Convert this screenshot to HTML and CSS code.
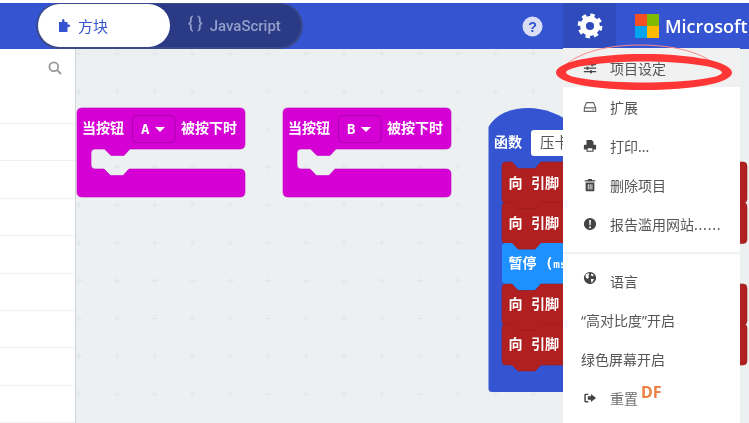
FILE: index.html
```html
<!DOCTYPE html>
<html lang="zh">
<head>
<meta charset="utf-8">
<title>方块编辑器</title>
<link rel="stylesheet" href="styles.css">
</head>
<body>
<div class="app">
  <header class="topbar">
    <div class="toggle">
      <div class="tab tab-on">
        <svg class="puzzle" viewBox="0 0 11 13"><path d="M0 3h3.2C2.6 1 3.4 0 4.3 0s1.700 1 1.100 3H8.500v2.600c1.600-.5 2.500.2 2.500 1.200s-.9 1.700-2.500 1.200V13H0z"/></svg>
        <span>方块</span>
      </div>
      <div class="tab tab-off"><span class="braces">{ }</span><span>JavaScript</span></div>
    </div>
    <svg class="help" viewBox="0 0 22 22"><circle cx="11" cy="11" r="10.500"/><text x="11" y="16.500" text-anchor="middle">?</text></svg>
    <div class="gear-cell">
      <svg class="gear" viewBox="0 0 26 26"><circle class="gear-teeth" cx="13" cy="13" r="10.600"/><circle class="gear-ring" cx="13" cy="13" r="7"/></svg>
    </div>
    <div class="brand">
      <div class="logo"><i class="sq-r"></i><i class="sq-g"></i><i class="sq-b"></i><i class="sq-y"></i></div>
      <span>Microsoft</span>
    </div>
  </header>
  <main class="workspace">
    <aside class="sidebar">
      <div class="search-row">
        <svg class="search" viewBox="0 0 14 14"><circle cx="5.800" cy="5.800" r="4.400"/><path d="M9 9l4 4"/></svg>
      </div>
      <div class="cat"></div><div class="cat"></div><div class="cat"></div><div class="cat"></div>
      <div class="cat"></div><div class="cat"></div><div class="cat"></div><div class="cat"></div>
    </aside>
    <svg class="canvas" viewBox="76 48 673 375">
      <defs>
        <pattern id="dots" x="76" y="48" width="37.850" height="37.850" patternUnits="userSpaceOnUse">
          <path class="plus" d="M3 1v7M-.5 4.500h7"/>
        </pattern>
        <path id="hat" d="M77 112q0-5 5-5H240q5 0 5 5V143q0 5-5 5H130l-6 6.500H111L104.500 148H95q-4 0-4 4V164q0 4 4 4H104l6.500 6.500H123l6-6.500H240q5 0 5 5V191q0 5-5 5H82q-5 0-5-5Z"/>
        <path id="stmt" d="M502 165q0-4 4-4H512l6 6.500H535l6-6.500H743q4 0 4 4V198q0 4-4 4H541l-6 6H518l-6-6H506q-4 0-4-4Z"/>
      </defs>
      <rect class="grid" x="76" y="48" width="673" height="375" fill="url(#dots)"/>

      <use class="hat" href="#hat"/>
      <rect class="field" x="132.500" y="114.500" width="42.500" height="27" rx="4"/>
      <text class="blk" x="82" y="132">当按钮</text>
      <text class="blk" x="141" y="132.500">A</text>
      <path class="caret" d="M155 126h10l-5 5z"/>
      <text class="blk" x="181" y="132">被按下时</text>

      <use class="hat" href="#hat" x="206"/>
      <rect class="field" x="338.500" y="114.500" width="42.500" height="27" rx="4"/>
      <text class="blk" x="288" y="132">当按钮</text>
      <text class="blk" x="347" y="132.500">B</text>
      <path class="caret" d="M361 126h10l-5 5z"/>
      <text class="blk" x="387" y="132">被按下时</text>

      <path class="fn" d="M488.500 126C496 113 512 107 528 107S562 113 575 126V391H492q-3.500 0-3.500-3.500Z"/>
      <text class="blk" x="494" y="146">函数</text>
      <rect class="input" x="531" y="129" width="40" height="26" rx="3"/>
      <text class="input-text" x="540" y="147">压卡</text>

      <use class="red" href="#stmt"/>
      <text class="blk" x="508.500" y="186.500">向 引脚</text>
      <use class="red" href="#stmt" y="40.500"/>
      <text class="blk" x="508.500" y="226.500">向 引脚</text>
      <path class="sky" d="M502 246q0-4 4-4H512l6 6.500H535l6-6.500H575V283H541l-6 6H518l-6-6H506q-4 0-4-4Z"/>
      <text class="blk" x="508.500" y="267">暂停 (<tspan class="blk-sm">ms</tspan>)</text>
      <use class="red" href="#stmt" y="122"/>
      <text class="blk" x="508.500" y="307.500">向 引脚</text>
      <use class="red" href="#stmt" y="162"/>
      <text class="blk" x="508.500" y="347.500">向 引脚</text>
    </svg>
  </main>
  <nav class="menu">
    <div class="item item-hover">
      <svg class="ico" viewBox="0 0 16 16"><path d="M1 3.500h14v1.400H1zM1 7.500h14v1.400H1zM1 11.500h14v1.400H1z"/><path d="M9.500 2.500h2.200v3.400H9.500zM4 6.500h2.200v3.400H4zM8 10.500h2.200v3.400H8z"/></svg>
      <span>项目设定</span>
    </div>
    <div class="item">
      <svg class="ico ico-line" viewBox="0 0 16 16"><path d="M1.500 9L4 3h8l2.500 6v4h-13zM1.500 9h13M11 11h1"/></svg>
      <span>扩展</span>
    </div>
    <div class="item">
      <svg class="ico" viewBox="0 0 16 16"><path d="M4 1h6l2 2v4H4zM1 7.500q0-1 1-1h12q1 0 1 1V12h-3v2.500H4V12H1zM5.300 10.500v2.800h5.400v-2.800z"/></svg>
      <span>打印...</span>
    </div>
    <div class="item">
      <svg class="ico" viewBox="0 0 16 16"><path d="M6 1h4l.7 1.500H14V4H2V2.500h3.300zM3 5h10v9q0 1-1 1H4q-1 0-1-1zM5.500 7v6h1V7zM7.600 7v6h1V7zM9.700 7v6h1V7z"/></svg>
      <span>删除项目</span>
    </div>
    <div class="item">
      <svg class="ico" viewBox="0 0 16 16"><path fill-rule="evenodd" d="M8 1a7 7 0 1 0 0 14A7 7 0 0 0 8 1zM7 3.500h2L8.700 9.500H7.300zM7 10.800h2v2H7z"/></svg>
      <span>报告滥用网站<b class="dots">......</b></span>
    </div>
    <div class="divider"></div>
    <div class="item item-globe">
      <svg class="ico" viewBox="0 0 16 16"><path fill-rule="evenodd" d="M8 1a7 7 0 1 0 0 14A7 7 0 0 0 8 1zM3 4l3-1.500 1.500 1L6 5.500l1 1.500L5 9 3 7.500zM9.500 2.800l3 1.700-1.500 1.500-2-1zM9 9h3.500l-1.500 3.500L9.500 13z"/></svg>
      <span>语言</span>
    </div>
    <div class="item item-plain"><span>“高对比度”开启</span></div>
    <div class="item item-plain"><span>绿色屏幕开启</span></div>
    <div class="item">
      <svg class="ico" viewBox="0 0 16 16"><path d="M6 3H3q-1.500 0-1.500 1.500v7Q1.500 13 3 13h3v-1.500H3.200v-7H6zM9 3.500L15 8l-6 4.500V10H5.500V6H9z"/></svg>
      <span class="smudged">重置</span>
    </div>
  </nav>
  <svg class="circle-note" viewBox="0 0 200 60">
    <path class="note-thin" d="M8 24C25 8 55 2 85 2S150 8 166 27"/>
    <path class="note-thick" fill-rule="evenodd" d="M1 29.500C1 19 40 11 89 11S177 19 177 29.500 138 47 89 47 1 40 1 29.500ZM11 29.500C11 35 47 39.500 89 39.500S167 35 167 29.500 131 18.500 89 18.500 11 24 11 29.500Z"/>
  </svg>
  <span class="watermark">DF</span>
</div>
</body>
</html>
```

FILE: styles.css
```css
* { box-sizing: border-box; }
html, body { margin: 0; height: 100%; overflow: hidden; background: #fff; }
.app {
  position: relative;
  width: 749px;
  height: 423px;
  padding-top: 3px;
  display: flex;
  flex-direction: column;
  font-family: "Noto Sans", "Noto Sans CJK SC", sans-serif;
  filter: blur(0.45px);
  overflow: hidden;
}
.topbar {
  flex: 0 0 45px;
  display: flex;
  align-items: flex-start;
  background: #3454d1;
  position: relative;
  z-index: 2;
}
.toggle {
  margin-left: 36px;
  width: 267px;
  height: 46px;
  display: flex;
  background: #2a3a85;
  border: 2px solid #3a4a8c;
  border-top-width: 1px;
  border-radius: 23px;
}
.tab { display: flex; align-items: center; height: 43px; }
.tab-on {
  width: 132px;
  background: #fff;
  border-radius: 22px;
  color: #3454d1;
  font-size: 15px;
  padding-left: 21px;
  gap: 8px;
}
.puzzle { width: 11px; height: 13px; fill: #3454d1; }
.tab-off {
  padding-left: 18px;
  color: #939fcb;
  font: 500 15px Roboto, sans-serif;
  gap: 7px;
}
.braces { font-size: 16px; position: relative; top: -2px; }
.help { width: 21px; height: 21px; margin: 13px 0 0 auto; }
.help circle { fill: #d9def5; }
.help text { fill: #3454d1; font: 700 15px "Liberation Sans", sans-serif; }
.gear-cell {
  flex: 0 0 53px;
  height: 45px;
  margin-left: 20px;
  background: #2f4bbc;
  display: flex;
  align-items: center;
  justify-content: center;
}
.gear { width: 26px; height: 26px; fill: none; stroke: #fff; }
.gear-teeth { stroke-width: 3.600; stroke-dasharray: 4.320 4; }
.gear-ring { stroke-width: 5.800; }
.brand {
  flex: 0 0 133px;
  min-width: 0;
  padding-left: 19px;
  display: flex;
  align-items: center;
  gap: 6px;
  height: 45px;
  color: #fff;
  font: 600 18px "Open Sans", sans-serif;
  white-space: nowrap;
}
.logo { display: grid; grid-template-columns: 12px 12px; grid-auto-rows: 12px; width: 24px; }
.logo i { display: block; }
.sq-r { background: #f25022; }
.sq-g { background: #7fba00; }
.sq-b { background: #00a4ef; }
.sq-y { background: #ffb900; }
.workspace { flex: 1; display: flex; min-height: 0; }
.sidebar {
  flex: 0 0 76px;
  background: #fff;
  border-right: 1px solid #cfd4d8;
}
.search-row {
  height: 75px;
  padding: 12px 0 0 48px;
  border-bottom: 1px solid #f0f1f3;
}
.search { display: block; width: 14px; height: 14px; fill: none; stroke: #999; stroke-width: 1.800; }
.cat { height: 37.400px; border-bottom: 1.500px solid #eff1f3; }
.canvas { flex: 1; width: 673px; height: 375px; display: block; background: #ecf0f1; }
.grid { stroke: none; }
.plus { stroke: #e0e5e8; stroke-width: 1; fill: none; }
.hat { fill: #d400d4; stroke: #c400c4; stroke-width: .6; }
.field { fill: #d400d4; stroke: #ad00ad; stroke-width: 1; }
.caret { fill: #fff; }
.blk {
  font: 700 14px "DejaVu Sans Mono", "Noto Sans CJK SC", monospace;
  fill: #fff;
}
.blk-sm { font-size: 11px; }
.fn { fill: #3454d1; }
.input { fill: #fff; }
.input-text { font: 400 14.500px "Noto Sans CJK SC", sans-serif; fill: #555; }
.red { fill: #b02020; stroke: #9a1c1c; stroke-width: .6; }
.sky { fill: #1e90ff; }
.menu {
  position: absolute;
  left: 563px;
  top: 48px;
  width: 177px;
  height: 375px;
  background: #fff;
  z-index: 3;
  color: #555;
  font-size: 14px;
}
.item {
  height: 39.200px;
  display: flex;
  align-items: center;
  padding-left: 20px;
  white-space: nowrap;
}
.item span { margin-left: 13px; }
.item-hover { background: #f1f1f1; }
.item-plain { padding-left: 18px; }
.item-plain span { margin-left: 0; }
.item-globe .ico { position: relative; top: -3px; }
.ico { width: 14px; height: 14px; flex: none; fill: #444; }
.ico-line { fill: none; stroke: #666; stroke-width: 1.300; }
.divider { height: 2px; background: #f1f2f3; margin: 8px 0 7px; }
.dots { font-weight: 400; letter-spacing: .8px; }
.smudged { filter: blur(.7px); opacity: .85; }
.circle-note {
  position: absolute;
  left: 555px;
  top: 43px;
  width: 200px;
  height: 60px;
  z-index: 4;
}
.note-thin { fill: none; stroke: #f88; stroke-width: 1; }
.note-thick { fill: #ff3636; }
.watermark {
  position: absolute;
  left: 641px;
  top: 381px;
  z-index: 5;
  color: #ee8044;
  font: 700 16px "Noto Sans", sans-serif;
}
```
